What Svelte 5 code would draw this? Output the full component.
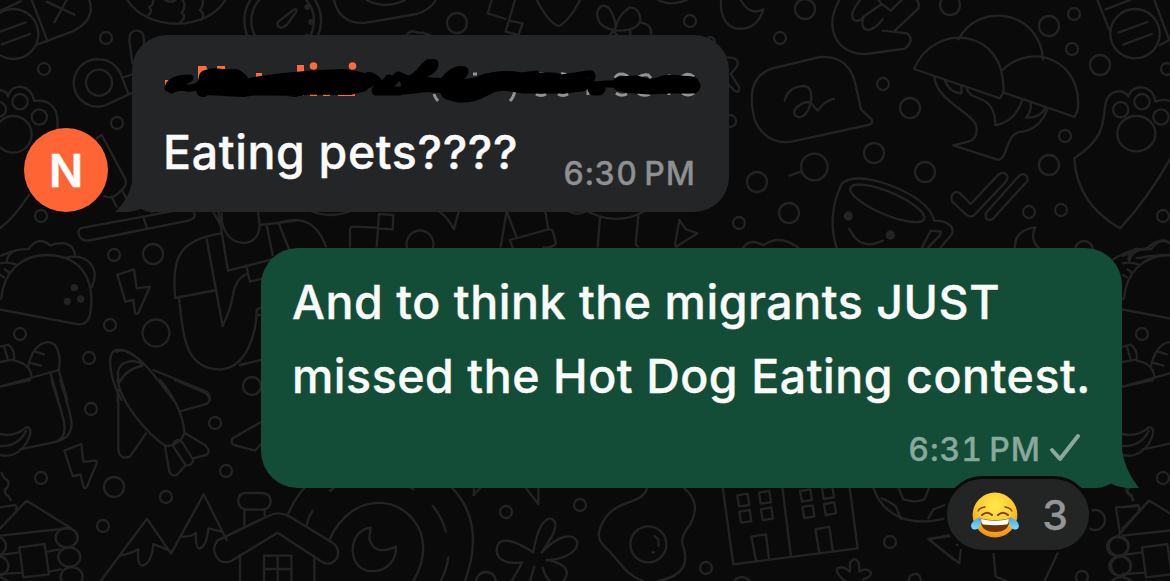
<script>
  const third = 'scale(0.33333)';
  // scattered bubbles of the wallpaper: x, y, radius
  const dots = [
    [106, 38, 6], [44, 69, 6], [117, 123, 6], [41, 216, 6], [457, 23, 10], [690, 21, 6],
    [805, 9, 10], [780, 38, 6], [950, 5, 10], [1049, 26, 10], [1074, 14, 6], [1072, 49, 6],
    [1100, 65, 10], [1167, 69, 6], [883, 84, 6], [910, 108, 10], [874, 153, 10], [925, 172, 10],
    [1049, 165, 10], [1065, 136, 6], [757, 182, 10], [789, 213, 10], [739, 223, 6], [730, 121, 6],
    [1029, 212, 6], [1061, 210, 6], [1163, 216, 6], [1084, 250, 9],
    [114, 255, 6], [153, 254, 10], [110, 325, 6], [156, 333, 13.5], [20, 334, 6], [89, 358, 6],
    [252, 386, 9], [91, 409, 6], [41, 478, 6], [114, 487, 10], [166, 497, 6], [103, 526, 6],
    [215, 423, 6], [226, 471, 6], [1142, 334, 6], [1163, 478, 6], [420, 244, 13.5],
    [506, 512, 6], [580, 505, 6], [486, 582, 10], [706, 568, 6], [742, 586, 9], [890, 542, 6],
    [1095, 520, 10], [1082, 577, 6]
  ];
</script>

<main class="chat">
  <svg class="wallpaper" viewBox="0 0 1170 581" aria-hidden="true">
    <g class="thin">
      {#each dots as [x, y, r]}<circle cx={x} cy={y} r={r} />{/each}
    </g>
    <g transform={third}>
      <circle cx="40" cy="102" r="75" />
      <path d="M0 95L77 67M5 133L90 102M0 32L62 4M95 0L143 125M113 133L218 94Q288 60 268 0M140 5L223 44M200 0L163 67" />
      <path d="M397 190L388 120Q388 92 410 92Q432 92 432 120V140" />
      <circle cx="297" cy="248" r="39" />
      <path d="M360 217Q338 178 297 178A71 71 0 1 0 318 315L386 283ZM370 232L400 222M386 283L400 278" />
      <circle cx="40" cy="403" r="55" /><circle cx="60" cy="305" r="23" /><circle cx="118" cy="351" r="23" /><circle cx="-4" cy="328" r="22" />
      <path d="M0 270Q22 275 24 290Q30 260 62 260Q95 265 103 303Q150 295 168 335Q176 360 170 400M88 583Q45 650 0 685" />
      <path d="M290 415L305 405L375 535Q384 555 365 570L345 588Q330 596 312 588M335 590L350 620M365 570L385 605" />
      <path d="M382 0C440 95 620 95 676 0M445 45Q460 35 448 22Q462 12 460 0M540 68Q562 50 545 38Q560 20 548 0M603 60Q618 45 600 30Q612 15 608 0M495 0Q512 10 527 0" />
      <circle cx="848" cy="62" r="115" /><circle cx="848" cy="62" r="94" />
      <path d="M835 65L880 30Q895 22 887 38L860 75Q845 88 836 80Q830 72 835 65Z" />
      <circle class="solid" cx="922" cy="21" r="9" /><circle class="solid" cx="934" cy="66" r="9" /><circle class="solid" cx="920" cy="108" r="7" />
      <path d="M1002 0Q1020 76 1100 68L1250 42Q1290 30 1308 0M1100 0Q1155 30 1215 0" />
    </g>
    <g transform="translate(380 0) scale(.33333)">
      <path d="M335 0L323 40L377 57M405 0L377 95L415 105L428 70L388 62M470 0Q510 75 538 78Q570 60 600 0M80 105Q90 90 103 95Q118 100 127 98L150 105" />
      <path d="M708 80Q695 10 664 18Q640 38 662 72Q685 92 720 92Q775 90 781 60Q778 20 748 23Q715 45 708 80L690 105M750 94L752 105M781 68Q815 70 814 105M700 95L712 105M835 0Q870 20 920 0" />
      <path d="M985 112Q1002 110 1005 125" />
    </g>
    <g transform="translate(720 0) scale(.33333)">
      <path d="M3 0Q0 70 45 85Q110 95 130 28Q90 50 62 0" />
      <path d="M358 0C310 85 350 165 440 162L555 146Q585 120 562 100L488 92M525 92L595 25Q600 8 590 0M420 0Q385 45 402 60Q420 68 430 50L485 12L512 32L545 0M430 55Q420 88 445 90Q465 88 488 58M475 0L487 14" />
      <path d="M155 206L300 171C365 165 398 205 408 260L423 328L455 358Q460 372 445 375L215 425C145 435 105 385 99 335C88 275 100 225 155 206Z" />
      <path d="M194 302Q205 260 250 258C275 258 276 285 272 310Q260 350 238 352Q212 345 230 322Q255 300 273 310L293 332Q315 302 342 296" />
      <path d="M22 172Q60 172 52 198L32 222L58 262Q60 280 44 273L20 248" />
      <path d="M582 207C640 65 860 80 850 278L840 295ZM715 118C780 0 960 35 969 178M845 212C940 120 1090 185 1073 330L1064 351L850 277" />
      <path d="M643 230C650 310 775 340 770 390Q770 418 745 425L700 436L830 478Q842 482 850 468C868 430 870 398 905 395Q960 388 983 325M740 265C750 305 810 280 824 350L826 376Q885 365 907 300M675 242Q690 280 725 280L724 260M932 308Q935 335 918 353Q960 355 978 322" />
      <circle cx="283" cy="501" r="40" /><path d="M208 527L245 514" />
      <path d="M352 750Q318 650 365 552C385 530 435 530 500 552Q630 600 642 662C690 662 705 685 694 705L655 750M605 745L632 692L663 695L660 706L625 742" />
      <ellipse cx="502" cy="610" rx="120" ry="34" transform="rotate(23 502 610)" />
      <circle class="solid" cx="385" cy="648" r="14" /><circle class="solid" cx="511" cy="705" r="14" />
      <path d="M388 686Q420 755 488 722" />
      <path d="M752 612L835 524Q850 512 861 525Q866 535 855 548L763 645Q752 654 740 645L697 605Q690 590 700 580Q710 572 720 580ZM797 640L897 528Q911 516 921 530Q927 540 916 550L820 655Q808 665 798 655Z" />
      <path d="M885 750Q880 690 946 682Q928 715 957 745M68 745Q90 712 130 736Q180 700 237 745" />
      <circle cx="1245" cy="101" r="74" />
      <path d="M1132 0L1170 95M1157 28L1230 0M1303 0L1348 120L1320 135M1195 98L1282 66M1210 134L1295 102" />
      <circle cx="1202" cy="329" r="23" /><circle cx="1266" cy="305" r="23" /><circle cx="1323" cy="351" r="23" /><ellipse cx="1249" cy="401" rx="57" ry="53" />
      <path d="M1063 475C1160 410 1147 365 1156 315C1162 270 1210 262 1225 290C1235 250 1300 250 1306 305Q1330 295 1350 303M1063 475Q1070 610 1200 685Q1280 600 1350 478" />
      <path d="M1180 778Q1230 745 1280 746Q1320 708 1350 728M1225 778Q1230 750 1250 746M1250 775Q1300 765 1350 765" />
    </g>
    <g id="taco" transform="translate(0 200) scale(.33333)">
      <path d="M235 98Q235 85 250 83L430 50L560 25Q575 20 582 38Q590 55 565 62L275 120Q240 128 235 98ZM430 50L440 82M450 20L456 36" />
      <path d="M-55 318L235 373Q262 375 270 345C290 230 235 165 140 165C60 165 10 220 4 295ZM0 168L35 155Q65 145 85 148Q115 105 150 136Q215 115 225 163M20 182Q25 160 45 152M200 172C270 160 300 210 275 262M0 190Q22 185 48 193M0 225L12 232M15 208L25 216" />
      <circle class="solid" cx="223" cy="263" r="11" /><circle class="solid" cx="202" cy="304" r="11" /><circle class="solid" cx="242" cy="297" r="11" />
      <path d="M352 224L402 208L410 265L450 260L415 338Q408 345 405 338L400 300L376 305Z" />
      <path d="M0 440L25 434Q45 450 42 478L0 486M12 438L24 480M42 482Q90 490 95 530M85 497C100 430 140 415 165 435Q185 465 176 510M107 455L132 463M86 487L122 497M0 560L176 510L202 600M152 520L175 600" />
      <path d="M365 600C325 530 320 455 350 450C400 440 460 520 520 600M460 510L615 573Q630 580 630 600M350 455Q370 445 385 458M358 548Q340 490 395 483Q425 485 427 498Q380 505 358 548M353 570V605" />
      <path d="M525 294C520 190 520 120 665 100M525 294L650 270M620 118L668 378C710 290 690 285 710 250Q720 230 742 222M537 294C550 400 550 510 665 508C740 500 770 400 770 330M655 35L684 212L855 168M665 40C660 150 785 155 778 70L774 36M640 36L665 80M780 75L890 62M800 75L818 165M837 72L870 155M738 196L750 245L788 235M720 495L790 478M770 330L790 318M770 345H790" />
    </g>
    <g id="cabin" transform="translate(0 380) scale(.33333)">
      <path d="M0 20L90 0M155 0C180 95 220 160 170 185L60 208M180 0C215 110 240 165 170 185M0 162Q45 172 78 142Q95 140 90 165C75 210 40 235 0 225M0 198Q55 200 78 152" />
      <path d="M352 0C370 90 480 200 505 198Q545 190 553 158C550 100 515 40 480 0M355 30V210Q360 240 390 230L438 160M525 0L615 38Q640 55 620 72L540 94M553 158L615 195Q635 215 618 225L580 235M495 200L508 275Q515 290 530 285L555 258M520 190Q540 170 552 195L580 240Q575 260 557 255L520 200Q515 185 535 180" />
      <path d="M193 212L244 192L250 245L288 242Q292 245 290 250L260 322Q252 328 250 318L242 284L218 288Z" />
      <path d="M5 278Q12 298 22 300Q32 315 14 330Q15 345 25 348L32 360M0 382L45 375Q52 378 48 388M0 445L80 362L212 444M0 467L212 444M58 502L134 492L147 583L70 592ZM0 525L58 517M142 515L178 508M0 582L68 578M147 575L183 568M0 590L25 603" />
      <ellipse cx="200" cy="473" rx="33" ry="29" /><ellipse cx="208" cy="531" rx="33" ry="29" /><ellipse cx="215" cy="590" rx="33" ry="29" />
      <ellipse cx="-12" cy="498" rx="30" ry="29" /><ellipse cx="-5" cy="558" rx="30" ry="29" />
      <path d="M302 603L441 416L513 521L611 343L680 480M360 527Q395 520 415 508Q410 555 427 557Q455 550 460 492L510 512M545 470Q570 472 588 458Q585 500 598 506Q620 500 625 445L665 455" />
      <path d="M785 125L698 175Q690 188 702 195L765 212L787 188" />
    </g>
    <use href="#taco" x="1122.7" /><use href="#cabin" x="1122.7" />
    <g transform="translate(250 470) scale(.33333)">
      <path d="M-15 69H35Q62 70 62 94Q60 119 35 119H-10Q-35 115-35 94Q-35 70-15 69ZM-17 119V170M44 119V135" />
      <path d="M-98 212Q-115 235-102 258Q-90 282-60 275L83 188L220 278Q245 288 262 262Q270 235 250 220L120 140Q85 120 50 140ZM-30 255V333M193 258V333M42 257H124V333M42 257V333M83 257V333M42 297H124" />
      <path d="M115 130Q135 85 165 52M605 52C690 140 675 250 645 333M238 210C300 65 465 65 513 190C530 250 510 300 490 333M170 165Q175 140 188 122M240 63L250 55M480 52L490 58M548 107Q575 140 588 185M595 262Q590 300 572 333" />
      <path d="M362 173C295 180 290 285 350 302C410 312 440 270 438 230Q370 260 358 205Z" />
      <path d="M670 75L692 52M672 75V55M828 55L865 102V55" />
      <path d="M850 247Q760 190 743 225C730 265 765 285 817 277L785 333M850 247Q865 155 898 145Q930 150 905 200L875 247C930 190 970 190 982 215C985 250 930 270 890 270C955 280 960 310 940 333M853 290L840 333M878 293Q885 320 900 333" />
    </g>
    <g transform="translate(590 470) scale(.33333)">
      <path d="M172 52C160 105 85 85 45 145C10 200 30 220 60 245C100 290 110 315 160 333M280 52C325 90 320 125 300 165Q265 205 282 235C295 285 275 320 205 333" />
      <circle cx="175" cy="223" r="54" /><path d="M193 198Q210 207 205 227M187 247H193" />
      <path d="M398 52L430 283L803 235L779 52M577 52L603 260M484 200L528 193L537 268M484 200L498 273M676 178L718 170L728 242M676 178L688 248" />
      <path d="M442 76L473 71L478 105L447 109ZM507 68L538 63L543 97L512 101ZM448 125L479 120L484 154L453 158ZM513 118L544 112L549 146L518 150ZM630 63L661 58L666 90L636 95ZM696 54L727 50L732 82L701 87ZM637 111L668 106L673 139L643 144ZM702 102L733 97L738 130L707 135Z" />
      <path d="M850 52C880 145 970 170 1065 145M925 52L940 88Q980 100 1003 88L1018 52M875 85Q920 105 920 115L933 148M1015 145L1030 118L1065 105M1080 195L1017 208L1090 268" />
      <path d="M765 333Q735 310 742 295Q758 285 780 305V280Q793 255 807 280L808 305Q830 290 843 308Q845 320 820 328M955 333L960 318Q980 305 990 320L993 333" />
    </g>
    <g transform="translate(890 410) scale(.33333)">
      <path d="M115 387L205 375M115 387L208 460L212 420M200 405L210 400M310 425L317 500L350 513M505 425L465 510M678 292L745 288M678 292L690 370M710 232Q705 250 725 255L728 270M682 380L775 273" />
      <ellipse cx="683" cy="410" rx="32" ry="29" /><ellipse cx="690" cy="468" rx="32" ry="29" /><path d="M665 513Q695 490 725 513" />
    </g>
    <g transform="translate(250 205) scale(.33333)">
      <path d="M300 125V75Q300 65 310 65L380 68M380 125L387 27L430 30L428 73L382 70M175 15Q240 45 310 15M560 15Q590 30 612 73L627 15M752 125L770 18L800 98M780 105L895 73Q910 72 910 85L918 115Q910 128 880 128M780 105L788 128M885 15L895 72M955 18Q980 35 1010 18Q1100 65 1185 18M1050 38L1043 125M1165 32L1157 118L1165 125M1275 118L1288 45L1308 73L1343 85L1278 125ZM90 52Q190 20 228 125" />
    </g>
  </svg>

  <section class="row incoming">
    <div class="avatar">N</div>
    <article class="bubble received">
      <svg class="tail tail-left" viewBox="0 0 44 60" aria-hidden="true"><path d="M17 0V30Q14 47 0 60Q17 62 32 54Q38 59 44 60V0Z" /></svg>
      <svg class="redaction" viewBox="163 59 540 46" aria-hidden="true">
        <g fill="#ff6a3d">
          <path d="M165 80h4v10h-4zM198 66h8l2 4-10 14zM217 66h8v8h-8zM198 86h6v9h-6zM256 73h6v4h-6zM297 65h7v10h-7zM299 92h5v4h-5zM310 92h7v4h-7zM323 92h7v4h-7zM338 93h17v3h-17z" />
          <circle cx="313.5" cy="66" r="3.8" /><circle cx="352.5" cy="66" r="3.8" />
        </g>
        <g fill="none" stroke="#929395" stroke-width="3">
          <path d="M434 94Q435 98 438 101M515 90Q514 97 510 101M453 76Q456 73 460 74M473 74h4M536 94Q541 97 546 94M558 94Q563 97 568 94M561 74Q567 73 569 80M539 74h5M615 78Q617 74 621 74Q626 74 628 77M616 93Q621 97 627 94M639 77Q643 74 648 75L651 78M638 93Q643 97 650 94M669 74v21M681 78Q687 71 694 77M682 93Q688 97 694 93M588 88v7" />
        </g>
        <g class="ink">
          <path stroke-width="7" d="M168 88Q170 78 190 78L171 90Q181 86 187 88Q196 89 202 82" />
          <path stroke-width="14" d="M203 90L206 77Q214 74 221 76L236 76L241 80L206 88L243 90Q270 85 295 90L254 84L283 80L318 77L345 76L360 79L368 81L318 85L301 89L245 88L215 82L235 82L251 86L275 83M208 87L350 88L362 85L369 79" />
          <path stroke-width="9" d="M360 80Q370 74 376 80Q381 84 376 91L400 91M386 83L389 79M388 87L398 76L410 81L420 73Q426 64 432 62Q437 65 429 71L409 80L405 90L440 86L448 77Q456 69 464 71Q464 77 447 84L412 88M423 80L450 90L476 86" />
          <path stroke-width="15" d="M448 92Q466 99 482 90L496 83L513 79L528 84L545 81L561 85L580 83M478 87L503 83L524 86L562 86L582 84M408 83L446 86M470 88L493 80M447 90L481 84" />
          <path stroke-width="13" d="M594 89L599 89" />
          <path stroke-width="7" d="M480 79Q500 72 522 76L536 74L529 79Q548 73 562 78L588 74Q594 73 591 80L584 86L606 84L622 84" />
          <path stroke-width="15" d="M620 84L636 83L651 87L668 82L692 84L693 86L670 86L649 87L624 85" />
        </g>
      </svg>
      <div class="line">
        <p class="text pets">Eating pets????</p>
        <time>6:30 PM</time>
      </div>
    </article>
  </section>

  <section class="row outgoing">
    <article class="bubble sent">
      <svg class="tail tail-right" viewBox="0 0 60 60" aria-hidden="true"><path d="M43 0V22Q46 43 60 60Q42 62 27 53Q18 60 0 60V0Z" /></svg>
      <p class="text first">And to think the migrants JUST</p>
      <p class="text second">missed the Hot Dog Eating contest.</p>
      <div class="status">
        <time>6:31 PM</time>
        <svg class="check" viewBox="0 0 32 30" aria-hidden="true"><path d="M3 17L11 26L29 3" /></svg>
      </div>
      <div class="reaction">
        <svg class="joy" viewBox="0 0 48 46" aria-label="Face with tears of joy">
          <defs>
            <radialGradient id="face" cx=".5" cy=".3" r=".72"><stop offset="0" stop-color="#ffe94e" /><stop offset=".55" stop-color="#fecb2f" /><stop offset="1" stop-color="#ee8a12" /></radialGradient>
            <linearGradient id="tear" x1="0" y1="0" x2="0" y2="1"><stop offset="0" stop-color="#3fa9e8" /><stop offset="1" stop-color="#7fdcff" /></linearGradient>
          </defs>
          <circle cx="24" cy="23" r="22.4" fill="url(#face)" />
          <g fill="none" stroke="#7a3f0a" stroke-linecap="round">
            <path stroke-width="1.3" d="M7 19Q9 15.5 14 15M41 19Q39 15.5 34 15" />
            <path stroke-width="2.1" d="M11 23Q16 18.5 21 23M27 23Q32 18.5 37 23" />
          </g>
          <path fill="#6b350c" d="M9.5 26.5Q24 30 38.5 26.5Q39 40 24 40Q9 40 9.5 26.5Z" />
          <path fill="#fff" d="M10.2 27Q24 30.5 37.8 27Q38 32 35.5 32.5Q24 34 12.5 32.5Q10 32 10.2 27Z" />
          <path fill="url(#tear)" d="M9 25Q11 34 6 37Q1 39 0 34Q0 29 9 25ZM39 25Q37 34 42 37Q47 39 48 34Q48 29 39 25Z" />
        </svg>
        <span>3</span>
      </div>
    </article>
  </section>
</main>

<style>
  :global(body) { background: #0a0a0a; overflow: hidden; }
  .chat {
    position: relative;
    box-sizing: border-box;
    width: 1170px;
    height: 581px;
    padding: 35px 48px 0 24px;
    display: flex;
    flex-direction: column;
    gap: 36px;
    overflow: hidden;
    background: #0a0a0a;
    font-family: Inter, "Liberation Sans", sans-serif;
  }
  .wallpaper {
    position: absolute;
    inset: 0;
    width: 1170px;
    height: 581px;
    fill: none;
    stroke: #232323;
    stroke-width: 7;
    stroke-linecap: round;
    stroke-linejoin: round;
  }
  .thin { stroke-width: 2.3; }
  .solid { fill: #232323; stroke: none; }
  .row { position: relative; display: flex; }
  .incoming { align-items: flex-end; gap: 24px; }
  .outgoing { justify-content: flex-end; }
  .avatar {
    width: 84px;
    height: 84px;
    border-radius: 50%;
    background: #ff6534;
    color: #fff;
    font-size: 45px;
    font-weight: 600;
    line-height: 85px;
    text-align: center;
    -webkit-text-stroke: 0.5px #fff;
  }
  .bubble { position: relative; box-sizing: border-box; }
  .received {
    width: 597px;
    height: 177px;
    padding: 24px 26px 0 31px;
    border-radius: 35px 35px 35px 20px;
    background: #242527;
  }
  .sent {
    width: 861px;
    height: 240px;
    padding: 17px 40px 0 31px;
    border-radius: 37px 37px 26px 37px;
    background: #144d37;
  }
  .tail { position: absolute; bottom: 0; }
  .tail-left { left: -17px; width: 44px; height: 60px; fill: #242527; }
  .tail-right { right: -17px; width: 60px; height: 60px; fill: #144d37; }
  .redaction { position: relative; display: block; width: 540px; height: 46px; }
  .ink { fill: none; stroke: #000; stroke-linecap: round; stroke-linejoin: round; }
  .line { position: relative; display: flex; justify-content: space-between; align-items: flex-start; margin-top: 11px; }
  .text {
    position: relative;
    margin: 0;
    color: #fafafa;
    font-size: 46.5px;
    font-weight: 500;
    letter-spacing: 0.54px;
    line-height: 74px;
    white-space: nowrap;
    -webkit-text-stroke: 0.4px #fafafa;
  }
  .pets { margin-top: -1px; letter-spacing: 0.62px; }
  time {
    color: #8f9092;
    font-size: 32px;
    font-weight: 500;
    font-variant-numeric: tabular-nums;
    letter-spacing: 1px;
    word-spacing: -3.4px;
    line-height: 40px;
    white-space: nowrap;
    -webkit-text-stroke: 0.3px currentColor;
  }
  .line time { margin-top: 38px; margin-right: 7px; }
  .status { position: relative; display: flex; justify-content: flex-end; gap: 8px; margin-top: 17px; margin-right: 1px; }
  .status time { color: #88a99b; }
  .check { width: 32px; height: 30px; margin-top: 3px; fill: none; stroke: #88a99b; stroke-width: 4; stroke-linecap: round; stroke-linejoin: round; }
  .reaction {
    position: absolute;
    left: 683px;
    top: 228px;
    box-sizing: border-box;
    width: 148px;
    height: 77px;
    padding: 0 21px 0 24px;
    display: flex;
    align-items: center;
    justify-content: space-between;
    border: 3px solid #0a0a0a;
    border-radius: 39px;
    background: #232525;
    color: #959597;
    font-size: 41px;
    font-weight: 500;
    -webkit-text-stroke: 0.3px currentColor;
  }
  .joy { width: 48px; height: 46px; }
</style>
